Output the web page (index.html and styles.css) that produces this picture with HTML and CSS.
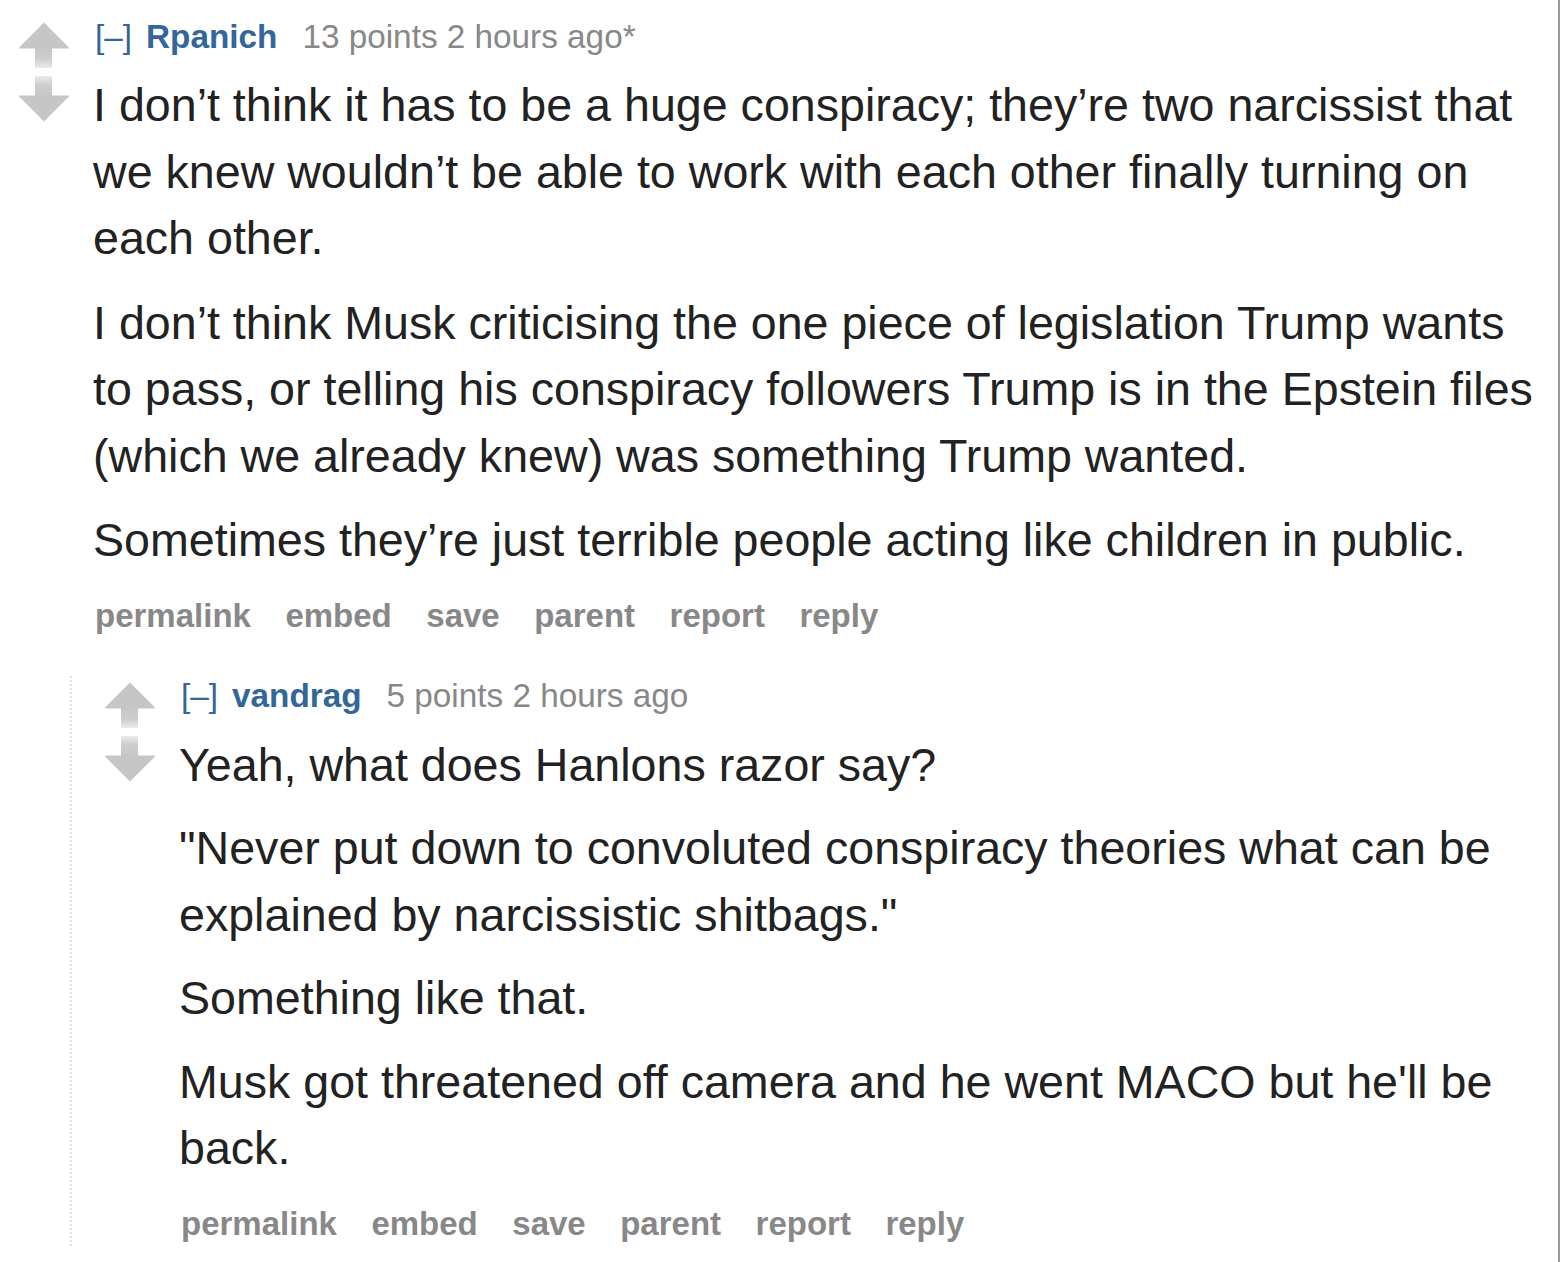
FILE: index.html
```html
<!DOCTYPE html>
<html lang="en">
<head>
<meta charset="utf-8">
<title>Comments</title>
<link rel="stylesheet" href="styles.css">
</head>
<body>
<div class="page">
  <div class="comment">
    <div class="midcol">
      <svg class="arrow" width="50" height="46" viewBox="0 0 50 46">
        <defs>
          <linearGradient id="upfade" x1="0" y1="0" x2="0" y2="1">
            <stop offset="0" stop-color="#c6c6c6"/>
            <stop offset="0.55" stop-color="#cdcdcd"/>
            <stop offset="1" stop-color="#ececec"/>
          </linearGradient>
          <linearGradient id="downfade" x1="0" y1="0" x2="0" y2="1">
            <stop offset="0" stop-color="#ececec"/>
            <stop offset="0.45" stop-color="#cdcdcd"/>
            <stop offset="1" stop-color="#c6c6c6"/>
          </linearGradient>
        </defs>
        <polygon points="25,0.5 50,25.5 50,26.5 0,26.5 0,25.5" fill="#c6c6c6"/>
        <rect x="16" y="26" width="17" height="20" fill="url(#upfade)"/>
      </svg>
      <svg class="arrow" width="50" height="46" viewBox="0 0 50 46">
        <rect x="16" y="0" width="17" height="20" fill="url(#downfade)"/>
        <polygon points="0,19.5 50,19.5 50,20.5 25,45.5 0,20.5" fill="#c6c6c6"/>
      </svg>
    </div>
    <div class="entry">
      <p class="tagline"><span class="expand">[–]</span><span class="author">Rpanich</span><span class="meta">13 points 2 hours ago*</span></p>
      <div class="md">
        <p>I don’t think it has to be a huge conspiracy; they’re two narcissist that we knew wouldn’t be able to work with each other finally turning on each other.</p>
        <p>I don’t think Musk criticising the one piece of legislation Trump wants to pass, or telling his conspiracy followers Trump is in the Epstein files (which we already knew) was something Trump wanted.</p>
        <p>Sometimes they’re just terrible people acting like children in public.</p>
      </div>
      <ul class="buttons">
        <li>permalink</li><li>embed</li><li>save</li><li>parent</li><li>report</li><li>reply</li>
      </ul>
    </div>
  </div>

  <div class="child">
    <div class="comment">
      <div class="midcol">
        <svg class="arrow" width="50" height="46" viewBox="0 0 50 46">
          <polygon points="25,0.5 50,25.5 50,26.5 0,26.5 0,25.5" fill="#c6c6c6"/>
          <rect x="16" y="26" width="17" height="20" fill="url(#upfade)"/>
        </svg>
        <svg class="arrow" width="50" height="46" viewBox="0 0 50 46">
          <rect x="16" y="0" width="17" height="20" fill="url(#downfade)"/>
          <polygon points="0,19.5 50,19.5 50,20.5 25,45.5 0,20.5" fill="#c6c6c6"/>
        </svg>
      </div>
      <div class="entry">
        <p class="tagline"><span class="expand">[–]</span><span class="author">vandrag</span><span class="meta">5 points 2 hours ago</span></p>
        <div class="md">
          <p>Yeah, what does Hanlons razor say?</p>
          <p>"Never put down to convoluted conspiracy theories what can be explained by narcissistic shitbags."</p>
          <p>Something like that.</p>
          <p>Musk got threatened off camera and he went MACO but he'll be back.</p>
        </div>
        <ul class="buttons">
          <li>permalink</li><li>embed</li><li>save</li><li>parent</li><li>report</li><li>reply</li>
        </ul>
      </div>
    </div>
  </div>
</div>
</body>
</html>
```

FILE: styles.css
```css
html, body {
  margin: 0;
  padding: 0;
  background: #ffffff;
}

body {
  font-family: "Liberation Sans", Arial, sans-serif;
  color: #222222;
}

.page {
  box-sizing: border-box;
  width: 1560px;
  min-height: 1262px;
  padding: 17px 12px 0 19px;
  border-right: 2px solid #9a9a9a;
}

.comment {
  display: flex;
  align-items: flex-start;
}

.midcol {
  flex: 0 0 50px;
  width: 50px;
  margin-top: 5px;
  margin-right: 24px;
  display: flex;
  flex-direction: column;
  gap: 8px;
}

.arrow {
  display: block;
}

.entry {
  flex: 1 1 auto;
  min-width: 0;
}

.tagline {
  margin: 0;
  padding-left: 2px;
  font-size: 33.3px;
  line-height: 40px;
  display: flex;
  white-space: nowrap;
}

.expand {
  color: #336699;
  margin-right: 14px;
}

.author {
  color: #336699;
  font-weight: bold;
  margin-right: 25px;
}

.meta {
  color: #888888;
}

.md {
  margin-top: 15px;
  font-size: 46.6px;
  line-height: 66.5px;
  color: #222222;
}

.md p {
  margin: 0 0 18px 0;
}

.buttons {
  list-style: none;
  margin: 22px 0 0 0;
  padding: 0 0 0 2px;
  display: flex;
  gap: 34.5px;
  font-size: 33px;
  line-height: 40px;
  font-weight: bold;
  color: #888888;
}

.child {
  margin-top: 40px;
  margin-left: 51px;
  padding-left: 33px;
  padding-bottom: 2px;
  border-left: 2px dotted #dcdcf2;
}

.child .midcol {
  margin-top: 6px;
}

.child .md {
  margin-top: 16px;
}

.child .md p {
  margin-bottom: 17px;
}
```
